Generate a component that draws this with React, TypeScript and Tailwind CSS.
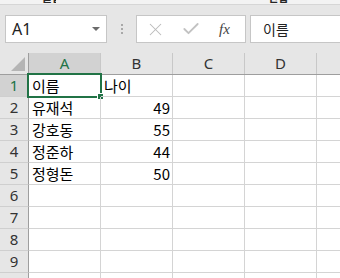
import { X, Check } from "lucide-react"

const data = [
  ["이름", "나이"],
  ["유재석", "49"],
  ["강호동", "55"],
  ["정준하", "44"],
  ["정형돈", "50"],
  ["", ""],
  ["", ""],
  ["", ""],
  ["", ""],
  ["", ""],
]

const cols = ["A", "B", "C", "D", ""]

export default function App() {
  return (
    <div className="w-[340px] h-[278px] overflow-hidden bg-white font-['Noto_Sans',sans-serif]">
      {/* ribbon remnant */}
      <div className="h-[5px] bg-[#f3f3f3] border-b border-[#d6d6d6] flex overflow-hidden">
        <div className="ml-[42px] w-[14px] h-[4px] overflow-hidden">
          <div className="-mt-[9px] text-[11px] leading-[13px] font-bold text-[#262626] font-['Noto_Sans_CJK_KR',sans-serif] whitespace-nowrap">
            글꼴
          </div>
        </div>
        <div className="ml-[212px] w-[22px] h-[4px] overflow-hidden">
          <div className="-mt-[9px] text-[11px] leading-[13px] font-bold text-[#262626] font-['Noto_Sans_CJK_KR',sans-serif] whitespace-nowrap">
            편집
          </div>
        </div>
      </div>

      {/* formula bar */}
      <div className="h-[48px] bg-[#e6e6e6] flex items-start pt-[10px]">
        <div className="ml-[5px] w-[102px] h-[28px] bg-white border border-[#c6c6c6] flex items-center pl-[6px] pr-[6px]">
          <span className="text-[16px] text-[#222] leading-none">A1</span>
          <span className="ml-auto w-0 h-0 border-l-[4px] border-r-[4px] border-t-[4px] border-l-transparent border-r-transparent border-t-[#6b6b6b]" />
        </div>
        <div className="ml-[13px] w-[3px] h-[28px] flex flex-col items-center justify-center gap-[2px]">
          <span className="w-[2px] h-[2px] bg-[#a8a8a8]" />
          <span className="w-[2px] h-[2px] bg-[#a8a8a8]" />
          <span className="w-[2px] h-[2px] bg-[#a8a8a8]" />
        </div>
        <div className="ml-[13px] w-[110px] h-[28px] bg-white border border-[#c6c6c6] flex items-center">
          <X className="ml-[8px] w-[21px] h-[21px] text-[#bababa]" strokeWidth={1.2} />
          <Check className="ml-[15px] w-[20px] h-[20px] text-[#c2c2c2]" strokeWidth={2.2} />
          <span className="ml-[18px] text-[15px] italic text-[#444] font-['Liberation_Serif',serif] leading-none">
            fx
          </span>
        </div>
        <div className="ml-[4px] flex-1 h-[28px] bg-white border border-[#c6c6c6] border-r-0 flex items-center pl-[12px]">
          <span className="text-[14px] text-[#222] font-['Noto_Sans_CJK_KR',sans-serif] leading-none">이름</span>
        </div>
      </div>

      {/* column header */}
      <div className="flex h-[22px] bg-[#e6e6e6] border-b border-[#9e9e9e]">
        <div className="w-[29px] shrink-0 border-r border-[#9e9e9e] flex items-end justify-end pr-[3px] pb-[3px]">
          <svg width="14" height="14" viewBox="0 0 14 14">
            <polygon points="14,0 14,14 0,14" fill="#b5b5b5" />
          </svg>
        </div>
        {cols.map((c, i) => (
          <div
            key={i}
            className={`w-[72px] shrink-0 border-r border-[#c8c8c8] flex items-center justify-center text-[15px] leading-none ${
              i === 0 ? "bg-[#d2d2d2] text-[#217346]" : "text-[#333]"
            }`}
          >
            {c}
          </div>
        ))}
      </div>

      {/* rows */}
      {data.map((r, ri) => (
        <div key={ri} className="flex h-[22px]">
          <div
            className={`w-[29px] shrink-0 border-r border-b border-r-[#9e9e9e] border-b-[#cfcfcf] flex items-center justify-center text-[15px] leading-none ${
              ri === 0 ? "bg-[#d2d2d2] text-[#217346]" : "bg-[#e6e6e6] text-[#333]"
            }`}
          >
            {ri + 1}
          </div>
          {cols.map((_, ci) => (
            <div
              key={ci}
              className={`relative w-[72px] shrink-0 border-r border-b border-[#d4d4d4] flex items-center text-[15px] leading-none text-black font-['Noto_Sans_CJK_KR',sans-serif] ${
                ci === 1 && ri > 0 ? "justify-end pr-[2px]" : "pl-[3px]"
              }`}
            >
              {ci < 2 ? r[ci] : ""}
              {ri === 0 && ci === 0 && (
                <>
                  <div className="absolute -left-[2px] -top-[2px] w-[75px] h-[25px] border-2 border-[#217346]" />
                  <div className="absolute left-[68px] top-[18px] w-[7px] h-[7px] bg-[#217346] border border-white" />
                </>
              )}
            </div>
          ))}
        </div>
      ))}
    </div>
  )
}
